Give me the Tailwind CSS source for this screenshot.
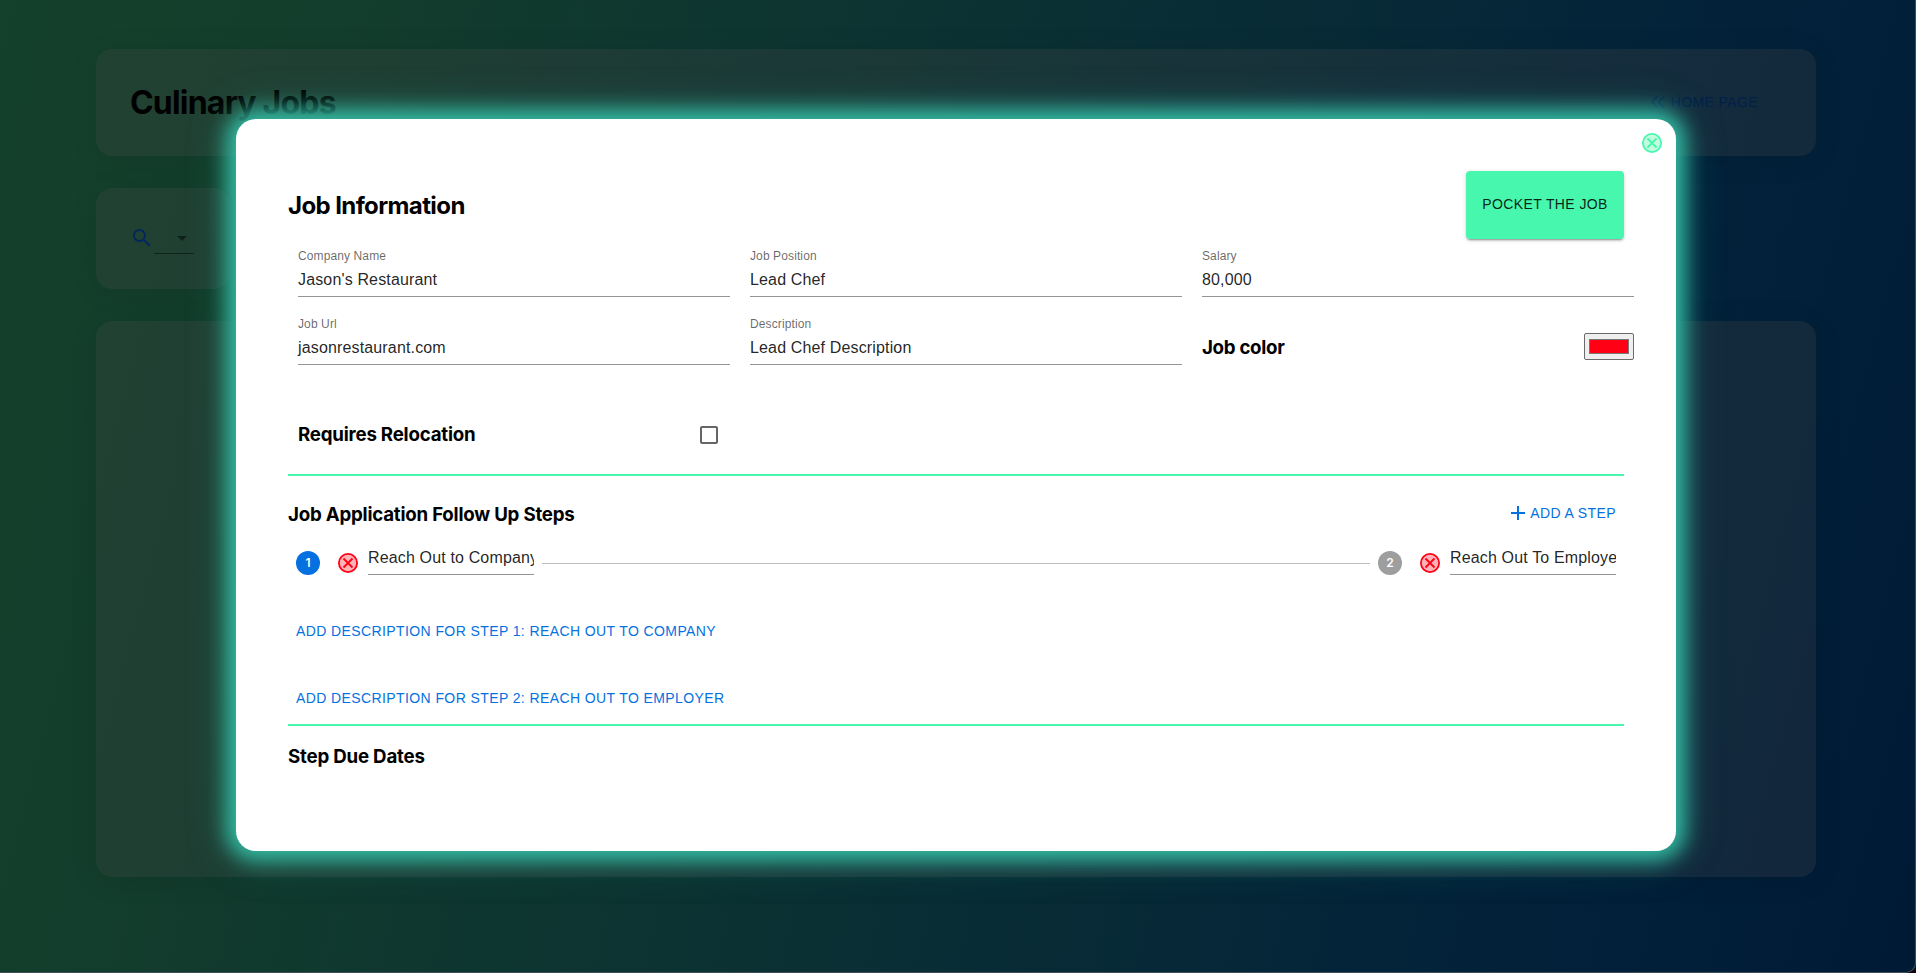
<!DOCTYPE html>
<html lang="en">
<head>
<meta charset="utf-8">
<title>Culinary Jobs</title>
<script src="https://cdn.jsdelivr.net/npm/@tailwindcss/browser@4"></script>
</head>
<body class="h-[973px] w-[1916px] overflow-hidden bg-[#14080c] font-['Liberation_Sans',sans-serif]">
<div class="relative h-[973px] w-[1916px] overflow-hidden rounded-br-[10px] border-r border-b border-[#3b505c] bg-[linear-gradient(105deg,#14412b_0%,#133d2c_15%,#0c3332_42%,#03233a_78%,#001a36_100%)]">

  <main class="flex flex-col gap-8 pt-[49px] pl-24">
    <header class="flex h-[107px] w-[1720px] items-center justify-between rounded-2xl bg-[#464646]/25 pr-[58px] pl-[34px] shadow-[0_4px_30px_rgba(0,0,0,0.08)]">
      <h1 class="font-['Inter',sans-serif] text-[32px] leading-10 font-bold tracking-[-0.8px] text-black">Culinary Jobs</h1>
      <a class="mb-[2px] flex items-center gap-[6px] text-[14px] leading-6 tracking-[0.4px] text-[#02204a]">
        <svg class="h-[12px] w-[14px]" viewBox="0 0 14 12" fill="none" stroke="currentColor" stroke-width="1.600"><path d="M6.400.6 1 6l5.400 5.400M13.200.6 7.800 6l5.400 5.400"/></svg>
        <span>HOME PAGE</span>
      </a>
    </header>
    <section class="flex h-[101px] w-[134px] items-center rounded-2xl bg-[#464646]/25 pl-[34px] shadow-[0_4px_30px_rgba(0,0,0,0.08)]">
      <svg class="mb-px size-6 text-[#02285c]" viewBox="0 0 24 24" fill="currentColor"><path d="M15.500 14h-.79l-.28-.27C15.410 12.590 16 11.110 16 9.500 16 5.910 13.090 3 9.500 3S3 5.910 3 9.500 5.910 16 9.500 16c1.610 0 3.090-.59 4.230-1.570l.27.28v.79l5 4.990L20.490 19l-4.990-5zm-6 0C7.010 14 5 11.990 5 9.500S7.010 5 9.500 5 14 7.010 14 9.500 11.990 14 9.500 14z"/></svg>
      <div class="mb-px flex h-8 w-10 items-center justify-end border-b border-[#0f2219]">
        <svg class="size-6 text-[#0f2219]" viewBox="0 0 24 24" fill="currentColor"><path d="M7 10l5 5 5-5z"/></svg>
      </div>
    </section>
    <section class="h-[556px] w-[1720px] rounded-2xl bg-[#464646]/25 shadow-[0_4px_30px_rgba(0,0,0,0.08)]"></section>
  </main>

  <div class="absolute top-[119px] left-[236px] flex h-[732px] w-[1440px] flex-col rounded-[20px] bg-white px-[52px] pt-[52px] shadow-[0_0_20px_9px_#33bda4,0_0_40px_10px_rgba(51,189,164,0.25)]">
    <svg class="absolute top-[14px] right-[14px] size-5" viewBox="0 0 20 20" fill="#c2fde0" stroke="#47f8ae" stroke-width="1.800"><circle cx="10" cy="10" r="9.100"/><path d="M5.500 5.500l9 9M14.500 5.500l-9 9"/></svg>

    <div class="flex h-[68px] items-center justify-between">
      <h2 class="pt-[2px] font-['Inter',sans-serif] text-[24px] leading-8 font-bold tracking-[-0.6px]">Job Information</h2>
      <button class="h-[68px] w-[158px] rounded bg-[#47f7ad] pb-px text-[14px] tracking-[0.4px] text-black/87 shadow-[0_3px_1px_-2px_rgba(0,0,0,0.2),0_2px_2px_0_rgba(0,0,0,0.14),0_1px_5px_0_rgba(0,0,0,0.12)]">POCKET THE JOB</button>
    </div>

    <div class="ml-[10px] grid w-[1336px] grid-cols-3 gap-x-5 gap-y-[10px]">
      <div class="flex h-[58px] flex-col justify-end border-b border-[#949494] pb-[5px]">
        <span class="text-[12px] leading-[17px] tracking-[0.11px] text-black/60">Company Name</span>
        <span class="pt-[3px] text-[16px] leading-[23px] tracking-[0.15px] text-black/87">Jason's Restaurant</span>
      </div>
      <div class="flex h-[58px] flex-col justify-end border-b border-[#949494] pb-[5px]">
        <span class="text-[12px] leading-[17px] tracking-[0.11px] text-black/60">Job Position</span>
        <span class="pt-[3px] text-[16px] leading-[23px] tracking-[0.15px] text-black/87">Lead Chef</span>
      </div>
      <div class="flex h-[58px] flex-col justify-end border-b border-[#949494] pb-[5px]">
        <span class="text-[12px] leading-[17px] tracking-[0.11px] text-black/60">Salary</span>
        <span class="pt-[3px] text-[16px] leading-[23px] tracking-[0.15px] text-black/87">80,000</span>
      </div>
      <div class="flex h-[58px] flex-col justify-end border-b border-[#949494] pb-[5px]">
        <span class="text-[12px] leading-[17px] tracking-[0.11px] text-black/60">Job Url</span>
        <span class="pt-[3px] text-[16px] leading-[23px] tracking-[0.15px] text-black/87">jasonrestaurant.com</span>
      </div>
      <div class="flex h-[58px] flex-col justify-end border-b border-[#949494] pb-[5px]">
        <span class="text-[12px] leading-[17px] tracking-[0.11px] text-black/60">Description</span>
        <span class="pt-[3px] text-[16px] leading-[23px] tracking-[0.15px] text-black/87">Lead Chef Description</span>
      </div>
      <div class="flex h-[58px] items-center justify-between pt-[22px]">
        <h3 class="pt-px font-['Inter',sans-serif] text-[18.700px] leading-6 font-bold tracking-[-0.3px]">Job color</h3>
        <div class="mb-px flex h-[27px] w-[50px] items-center justify-center rounded-[2px] border border-[#6b6b6b] bg-[#efefef]">
          <div class="h-[15px] w-10 border border-[#777] bg-[#ff0014]"></div>
        </div>
      </div>
    </div>

    <div class="mt-[49px] ml-[10px] flex h-[42px] w-[432px] items-center justify-between pr-[9px]">
      <h3 class="font-['Inter',sans-serif] text-[18.700px] leading-6 font-bold tracking-[-0.22px]">Requires Relocation</h3>
      <svg class="size-6 text-black/60" viewBox="0 0 24 24" fill="currentColor"><path d="M19 5v14H5V5h14m0-2H5c-1.100 0-2 .9-2 2v14c0 1.100.9 2 2 2h14c1.100 0 2-.9 2-2V5c0-1.100-.9-2-2-2z"/></svg>
    </div>

    <div class="mt-[18px] h-[2px] shrink-0 bg-[#47f7ad]"></div>

    <div class="mt-[20px] flex h-[37px] items-center justify-between pr-2">
      <h3 class="font-['Inter',sans-serif] text-[18.700px] leading-6 font-bold tracking-[-0.22px]">Job Application Follow Up Steps</h3>
      <button class="mb-[3px] flex items-center gap-[2px] text-[14px] leading-6 tracking-[0.4px] text-[#0571e0]">
        <svg class="size-5" viewBox="0 0 20 20" fill="none" stroke="currentColor" stroke-width="2"><path d="M10 3v14M3 10h14"/></svg>
        <span class="pb-px">ADD A STEP</span>
      </button>
    </div>

    <div class="mt-[9px] flex h-[42px] items-center px-2">
      <div class="flex size-6 shrink-0 items-center justify-center rounded-full bg-[#0571e0] font-['Inter',sans-serif] text-[12px] font-semibold text-white">1</div>
      <svg class="mr-[10px] ml-[18px] size-5 shrink-0" viewBox="0 0 20 20" fill="#ffb3b8" stroke="#ff0014" stroke-width="1.800"><circle cx="10" cy="10" r="9.100"/><path d="M5.500 5.500l9 9M14.500 5.500l-9 9"/></svg>
      <div class="mb-[5px] h-[29px] w-[166px] shrink-0 overflow-hidden border-b border-[#949494] text-[16px] leading-[23px] tracking-[0.15px] whitespace-nowrap text-black/87">Reach Out to Company</div>
      <div class="mx-2 mt-px h-px grow bg-[#bdbdbd]"></div>
      <div class="flex size-6 shrink-0 items-center justify-center rounded-full bg-[#9e9e9e] font-['Inter',sans-serif] text-[12px] font-semibold text-white">2</div>
      <svg class="mr-[10px] ml-[18px] size-5 shrink-0" viewBox="0 0 20 20" fill="#ffb3b8" stroke="#ff0014" stroke-width="1.800"><circle cx="10" cy="10" r="9.100"/><path d="M5.500 5.500l9 9M14.500 5.500l-9 9"/></svg>
      <div class="mb-[5px] h-[29px] w-[166px] shrink-0 overflow-hidden border-b border-[#949494] text-[16px] leading-[23px] tracking-[0.15px] whitespace-nowrap text-black/87">Reach Out To Employer</div>
    </div>

    <div class="mt-[35px] flex flex-col gap-[43px] pl-2 text-[14px] leading-6 tracking-[0.4px] text-[#0571e0]">
      <span>ADD DESCRIPTION FOR STEP 1: REACH OUT TO COMPANY</span>
      <span>ADD DESCRIPTION FOR STEP 2: REACH OUT TO EMPLOYER</span>
    </div>

    <div class="mt-[14px] h-[2px] shrink-0 bg-[#47f7ad]"></div>
    <h3 class="mt-[19px] font-['Inter',sans-serif] text-[18.700px] leading-6 font-bold tracking-[-0.2px]">Step Due Dates</h3>
  </div>
</div>
</body>
</html>
